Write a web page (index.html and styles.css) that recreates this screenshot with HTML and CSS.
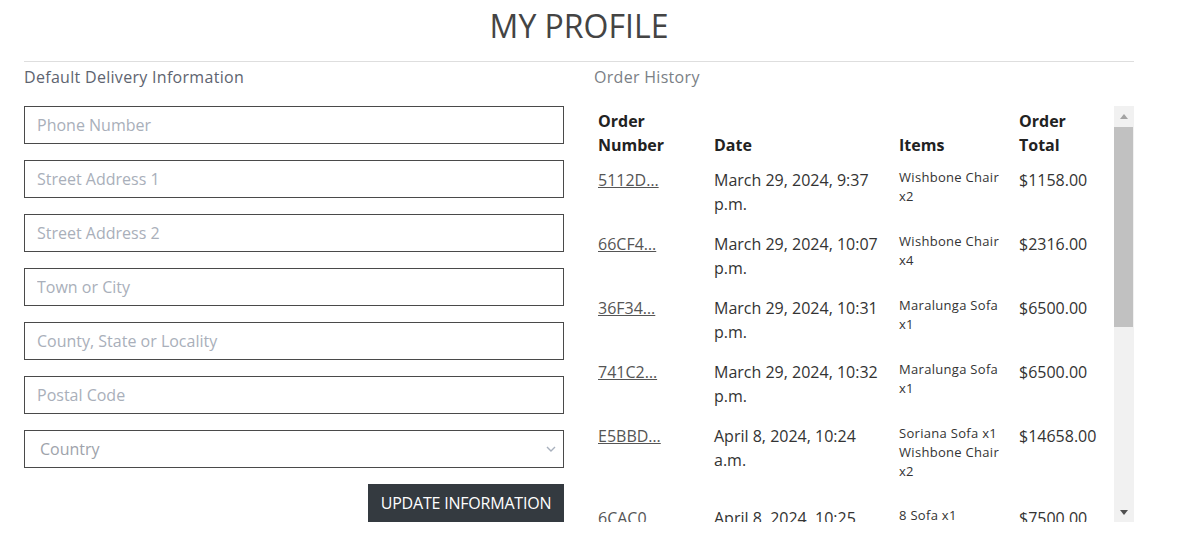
FILE: index.html
```html
<!DOCTYPE html>
<html lang="en">
<head>
<meta charset="utf-8">
<title>My Profile</title>
<link rel="stylesheet" href="styles.css">
</head>
<body>
<div class="page">
  <h1 class="title">MY PROFILE</h1>
  <hr class="rule">
  <div class="columns">
    <section class="col">
      <p class="col-heading">Default Delivery Information</p>
      <form class="form">
        <input class="field" type="text" placeholder="Phone Number">
        <input class="field" type="text" placeholder="Street Address 1">
        <input class="field" type="text" placeholder="Street Address 2">
        <input class="field" type="text" placeholder="Town or City">
        <input class="field" type="text" placeholder="County, State or Locality">
        <input class="field" type="text" placeholder="Postal Code">
        <div class="select-wrap">
          <select class="field select">
            <option selected>Country</option>
          </select>
          <svg class="chevron" width="10" height="6" viewBox="0 0 10 6"><path d="M1 1l4 4 4-4" fill="none" stroke="#a8b0bd" stroke-width="1.4"/></svg>
        </div>
        <button class="btn" type="button">UPDATE INFORMATION</button>
      </form>
    </section>
    <section class="col">
      <p class="col-heading light">Order History</p>
      <div class="scroll-box">
        <div class="scroll-view">
          <table class="orders">
            <colgroup>
              <col class="c1"><col class="c2"><col class="c3"><col class="c4">
            </colgroup>
            <thead>
              <tr><th>Order Number</th><th>Date</th><th>Items</th><th class="th-total">Order Total</th></tr>
            </thead>
            <tbody>
              <tr><td><a href="#">5112D…</a></td><td>March 29, 2024, 9:37 p.m.</td><td><div class="items"><div>Wishbone Chair x2</div></div></td><td>$1158.00</td></tr>
              <tr><td><a href="#">66CF4…</a></td><td>March 29, 2024, 10:07 p.m.</td><td><div class="items"><div>Wishbone Chair x4</div></div></td><td>$2316.00</td></tr>
              <tr><td><a href="#">36F34…</a></td><td>March 29, 2024, 10:31 p.m.</td><td><div class="items"><div>Maralunga Sofa x1</div></div></td><td>$6500.00</td></tr>
              <tr><td><a href="#">741C2…</a></td><td>March 29, 2024, 10:32 p.m.</td><td><div class="items"><div>Maralunga Sofa x1</div></div></td><td>$6500.00</td></tr>
              <tr><td><a href="#">E5BBD…</a></td><td>April 8, 2024, 10:24 a.m.</td><td><div class="items"><div>Soriana Sofa x1</div><div>Wishbone Chair x2</div></div></td><td>$14658.00</td></tr>
              <tr><td><a href="#">6CAC0…</a></td><td>April 8, 2024, 10:25 a.m.</td><td><div class="items"><div>8 Sofa x1</div></div></td><td>$7500.00</td></tr>
              <tr><td><a href="#">9A1F7…</a></td><td>April 9, 2024, 11:02 a.m.</td><td><div class="items"><div>Wishbone Chair x2</div></div></td><td>$1158.00</td></tr>
              <tr><td><a href="#">B73E2…</a></td><td>April 10, 2024, 3:15 p.m.</td><td><div class="items"><div>Maralunga Sofa x1</div></div></td><td>$6500.00</td></tr>
              <tr><td><a href="#">C08D4…</a></td><td>April 12, 2024, 5:41 p.m.</td><td><div class="items"><div>Soriana Sofa x1</div></div></td><td>$8000.00</td></tr>
              <tr><td><a href="#">D2F96…</a></td><td>April 14, 2024, 9:08 a.m.</td><td><div class="items"><div>8 Sofa x1</div></div></td><td>$7500.00</td></tr>
            </tbody>
          </table>
        </div>
        <div class="scrollbar" aria-hidden="true">
          <span class="sb-btn"><span class="tri-up"></span></span>
          <span class="sb-thumb"></span>
          <span class="sb-btn sb-down"><span class="tri-down"></span></span>
        </div>
      </div>
    </section>
  </div>
</div>
</body>
</html>
```
FILE: styles.css
```css
* { box-sizing: border-box; }
html, body { margin: 0; padding: 0; background: #fff; }
body {
  font-family: "Open Sans", "Liberation Sans", sans-serif;
  color: #333;
  font-size: 16px;
  line-height: 24px;
}
.page {
  width: 1110px;
  margin-left: 24px;
}
.title {
  margin: 0;
  padding-top: 7px;
  font-size: 32px;
  line-height: 38px;
  font-weight: 500;
  color: #444;
  text-align: center;
}
.rule {
  margin: 16px 0 0;
  border: 0;
  border-top: 1px solid #dedede;
  height: 0;
}
.columns {
  display: grid;
  grid-template-columns: 540px 540px;
  column-gap: 30px;
}
.col-heading {
  margin: 3px 0 17px;
  font-size: 16px;
  line-height: 24px;
  letter-spacing: 0.3px;
  color: #5e6470;
}
.col-heading.light { color: #7b7f86; }
.form {
  display: flex;
  flex-direction: column;
  gap: 16px;
}
.field {
  display: block;
  width: 100%;
  height: 38px;
  border: 1px solid #4a4a4a;
  border-radius: 0;
  padding: 0 12px;
  font-family: inherit;
  font-size: 16px;
  color: #333;
  background: #fff;
  outline: none;
}
.field::placeholder { color: #a9afba; }
.select-wrap { position: relative; }
.select {
  appearance: none;
  -webkit-appearance: none;
  padding-left: 15px;
  color: #9ea3ab;
}
.chevron {
  position: absolute;
  right: 8px;
  top: 16px;
}
.btn {
  align-self: flex-end;
  height: 38px;
  width: 196px;
  padding: 0;
  border: 0;
  border-radius: 0;
  background: #343a40;
  color: #fff;
  font-family: inherit;
  font-size: 16px;
  letter-spacing: -0.2px;
}
.scroll-box {
  display: flex;
  height: 416px;
}
.scroll-view {
  flex: 1;
  min-width: 0;
  overflow: hidden;
}
.scrollbar {
  width: 20px;
  flex: none;
  display: flex;
  flex-direction: column;
  background: #f1f1f1;
}
.sb-btn {
  height: 20px;
  display: flex;
  align-items: center;
  justify-content: center;
}
.sb-down { margin-top: auto; }
.tri-up {
  width: 0; height: 0;
  border-left: 4.5px solid transparent;
  border-right: 4.5px solid transparent;
  border-bottom: 5px solid #a3a3a3;
}
.tri-down {
  width: 0; height: 0;
  border-left: 4.5px solid transparent;
  border-right: 4.5px solid transparent;
  border-top: 5px solid #505050;
}
.sb-thumb {
  height: 200px;
  margin: 1px 1px 0 0;
  background: #c1c1c1;
}
.orders {
  width: 100%;
  border-collapse: collapse;
  table-layout: fixed;
}
.c1 { width: 116px; }
.c2 { width: 185px; }
.c3 { width: 120px; }
.orders th {
  text-align: left;
  vertical-align: bottom;
  padding: 3px 4px;
  font-weight: 700;
  color: #222;
}
.orders th.th-total { padding-right: 14px; }
.orders td {
  vertical-align: top;
  padding: 8px 4px;
  color: #333;
}
.orders a {
  color: #555;
  text-decoration: underline;
}
.items {
  font-size: 13px;
  line-height: 19px;
  padding-bottom: 9px;
  letter-spacing: 0.3px;
  color: #333;
}
```
